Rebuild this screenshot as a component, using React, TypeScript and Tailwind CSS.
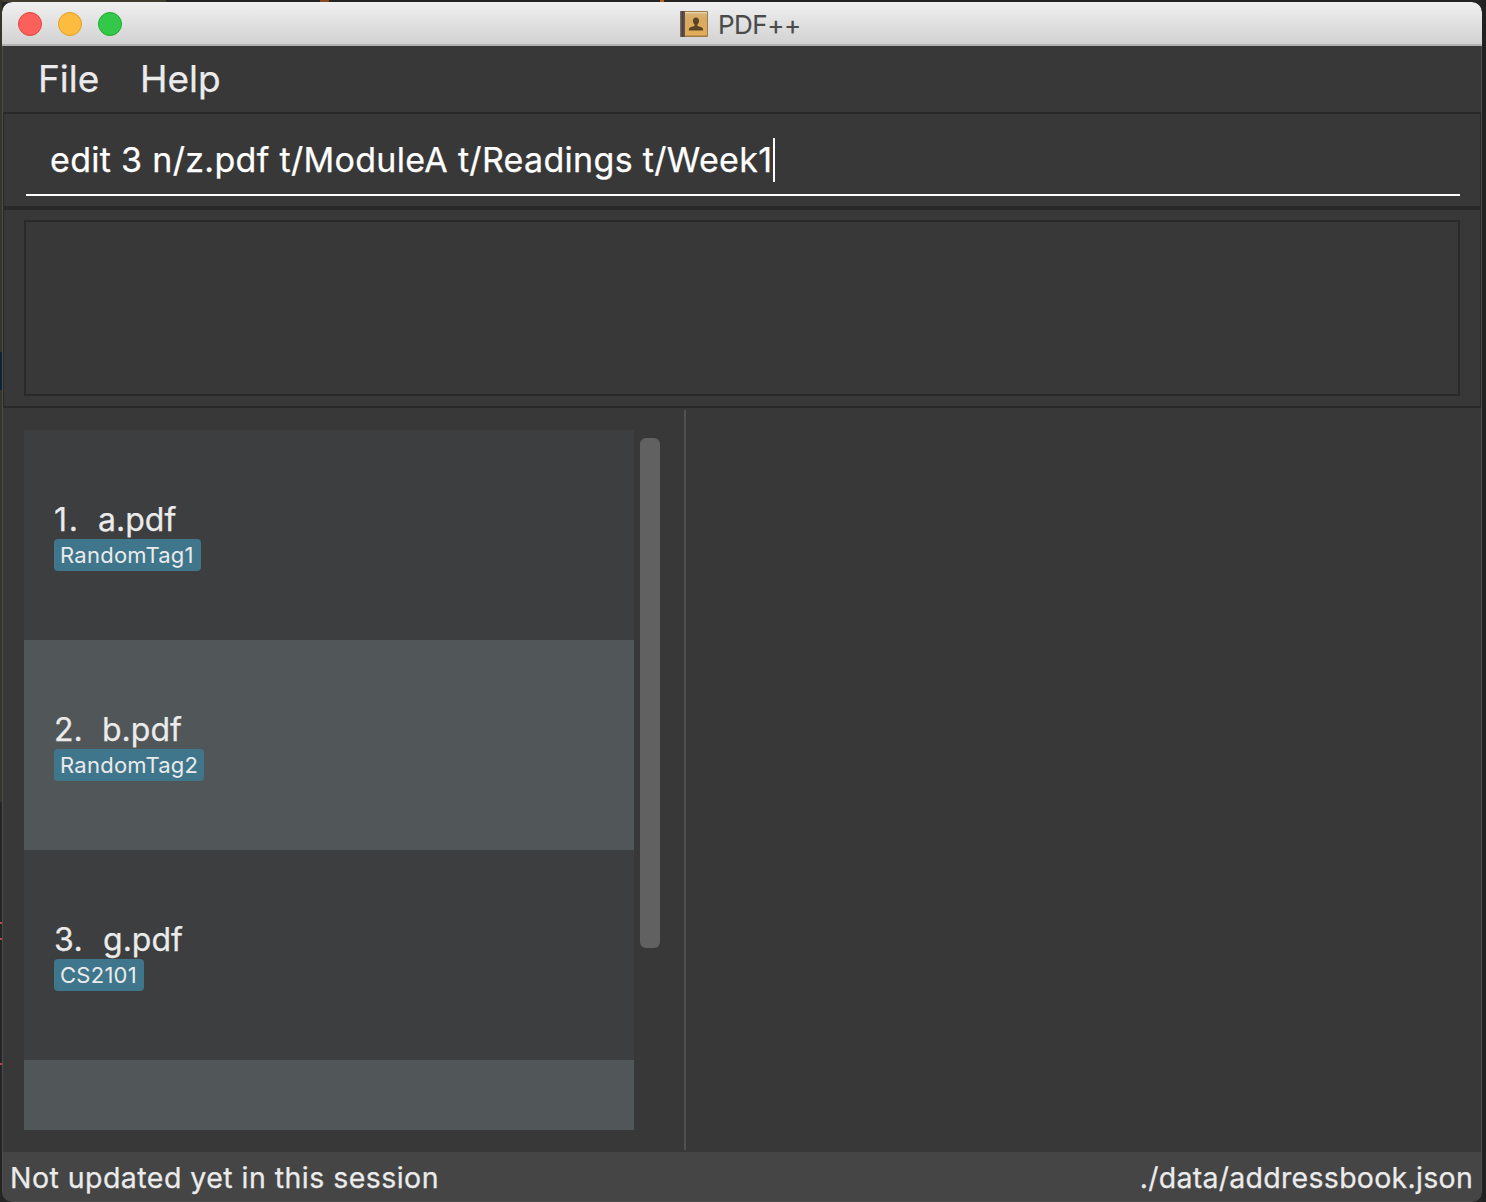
const ink = "text-[#ebebeb]";

const files = [
  { index: "1.", name: "a.pdf", tag: "RandomTag1", row: "bg-[#3c3e3f]", indexWidth: "w-[44px]", indexTracking: "tracking-[1.8px]", tagWidth: "w-[147px]" },
  { index: "2.", name: "b.pdf", tag: "RandomTag2", row: "bg-[#515658]", indexWidth: "w-[48px]", indexTracking: "tracking-normal", tagWidth: "w-[150px]" },
  { index: "3.", name: "g.pdf", tag: "CS2101", row: "bg-[#3c3e3f]", indexWidth: "w-[49px]", indexTracking: "tracking-[0.5px]", tagWidth: "w-[90px]" },
];

function BookIcon() {
  return (
    <svg width="28" height="28" viewBox="0 0 28 28">
      <defs>
        <linearGradient id="cover" x1="0" y1="0" x2="0" y2="1">
          <stop offset="0" stopColor="#d9b77c" />
          <stop offset="0.3" stopColor="#d8aa64" />
          <stop offset="1" stopColor="#e3ad58" />
        </linearGradient>
        <linearGradient id="spine" x1="0" y1="0" x2="1" y2="0">
          <stop offset="0" stopColor="#83706a" />
          <stop offset="0.5" stopColor="#4b4140" />
          <stop offset="1" stopColor="#6a5a50" />
        </linearGradient>
      </defs>
      <rect x="0" y="1" width="28" height="26" rx="1" fill="#9c7b48" />
      <rect x="5" y="2" width="22" height="23.5" fill="url(#cover)" />
      <rect x="5" y="2" width="22" height="1.2" fill="#ead7b2" />
      <rect x="0" y="1" width="5" height="26" rx="1" fill="url(#spine)" />
      <path
        d="M16 7.500c-1.900 0-3.100 1.300-3.100 3.200 0 1.600.7 2.800 1.600 3.500v1.700c-1.600.7-5.600.9-5.600 3.300V20.500h14.200v-1.300c0-2.400-4-2.600-5.600-3.300v-1.700c.9-.7 1.600-1.900 1.600-3.500C19.100 8.800 17.900 7.500 16 7.500z"
        fill="#5b4423"
      />
    </svg>
  );
}

function TitleBar() {
  return (
    <header className="relative flex h-[44px] shrink-0 items-start rounded-t-[10px] border-b-2 border-[#b1b1b1] bg-linear-to-b from-[#f0f0f0] to-[#d2d2d2]">
      <div className="flex gap-4 pt-[10px] pl-4">
        <span className="size-6 rounded-full border border-[#e2463f] bg-[#fc605b]" />
        <span className="size-6 rounded-full border border-[#dfa023] bg-[#fdbc40]" />
        <span className="size-6 rounded-full border border-[#1dab2c] bg-[#34c84a]" />
      </div>
      <div className="absolute top-[8px] left-[678px] flex items-start">
        <BookIcon />
        <span className="ml-[10px] text-[26px] leading-[30px] tracking-[-0.5px] whitespace-nowrap text-[#4b4b4b] [-webkit-text-stroke:0.1px_currentColor]">PDF++</span>
      </div>
    </header>
  );
}

export default function App() {
  return (
    <div className="flex h-[1202px] w-[1486px] overflow-hidden bg-[#242424] font-['Inter',sans-serif] [-webkit-text-stroke:0.25px_currentColor]">
      <div className="flex w-[2px] shrink-0 flex-col bg-[#242424]">
        <div className="h-[352px] bg-[#37342a]" />
        <div className="h-[38px] bg-[#0b2238]" />
        <div className="h-[412px] bg-[#37342a]" />
        <div className="mt-[120px] h-[2px] bg-[#b5494b]" />
        <div className="mt-[14px] h-[2px] bg-[#b5494b]" />
        <div className="mt-[123px] h-[2px] bg-[#b5494b]" />
      </div>
      <div className="flex w-[1480px] shrink-0 flex-col">
        <div className="flex h-[2px] shrink-0">
          <div className="w-[164px] bg-[#423e2f]" />
          <div className="ml-[154px] w-[9px] bg-[#8a4b1f]" />
          <div className="ml-[331px] w-[4px] bg-[#b5651f]" />
        </div>
        <div className="flex h-[1200px] flex-col overflow-hidden rounded-t-[10px] rounded-b-[10px] bg-[#383838]">
          <TitleBar />
          <div className="flex min-h-0 flex-1 flex-col rounded-b-[10px] border-x border-b border-[#4c4c4c]">
            <nav className={`flex h-[66px] shrink-0 items-center pl-[35px] text-[37px] ${ink}`}>
              <span className="w-[102px] whitespace-nowrap">File</span>
              <span className="whitespace-nowrap">Help</span>
            </nav>
            <section className="flex h-[98px] shrink-0 flex-col border-x border-t-2 border-b-4 border-[#292929] pt-[24px] pr-[20px] pl-[22px]">
              <div className="flex h-[58px] items-start border-b-2 border-white pl-[24px]">
                <span className="w-[723px] text-[34px] leading-[44px] tracking-[0.31px] whitespace-nowrap text-white">
                  edit 3 n/z.pdf t/ModuleA t/Readings t/Week1
                </span>
                <span className="h-[44px] w-[2px] bg-white" />
              </div>
            </section>
            <section className="h-[198px] shrink-0 border-x border-b-2 border-[#292929] px-[20px] py-[10px]">
              <div className="h-full border-2 border-[#292929]" />
            </section>
            <main className="flex h-[744px] shrink-0">
              <div className="flex w-[681px] shrink-0 pt-[22px] pl-[21px]">
                <div className="h-[700px] w-[610px] overflow-hidden">
                  {files.map((file) => (
                    <article key={file.tag} className={`flex h-[210px] flex-col items-start pt-[70px] pl-[30px] ${file.row} ${ink}`}>
                      <div className="flex h-[39px] text-[32px] leading-[40px] whitespace-nowrap">
                        <span className={`${file.indexWidth} ${file.indexTracking}`}>{file.index}</span>
                        <span>{file.name}</span>
                      </div>
                      <span className={`h-[32px] rounded-[4px] bg-[#3f768b] px-[6px] text-[22px] leading-[32px] tracking-[0.26px] whitespace-nowrap [-webkit-text-stroke:0px] ${file.tagWidth}`}>
                        {file.tag}
                      </span>
                    </article>
                  ))}
                  <div className="h-[70px] bg-[#515658]" />
                </div>
                <div className="mt-[8px] ml-[6px] h-[510px] w-[20px] rounded-[6px] bg-[#616161]" />
              </div>
              <div className="mt-[2px] h-[740px] w-[2px] bg-[#505050]" />
            </main>
            <footer className={`flex flex-1 items-center justify-between rounded-b-[9px] bg-[#454545] pt-[4px] pr-[8px] pl-[7px] text-[28.5px] ${ink}`}>
              <span className="tracking-[0.46px] whitespace-nowrap">Not updated yet in this session</span>
              <span className="tracking-[0.28px] whitespace-nowrap">./data/addressbook.json</span>
            </footer>
          </div>
        </div>
      </div>
      <div className="w-[4px] shrink-0 bg-[#212121]" />
    </div>
  );
}
